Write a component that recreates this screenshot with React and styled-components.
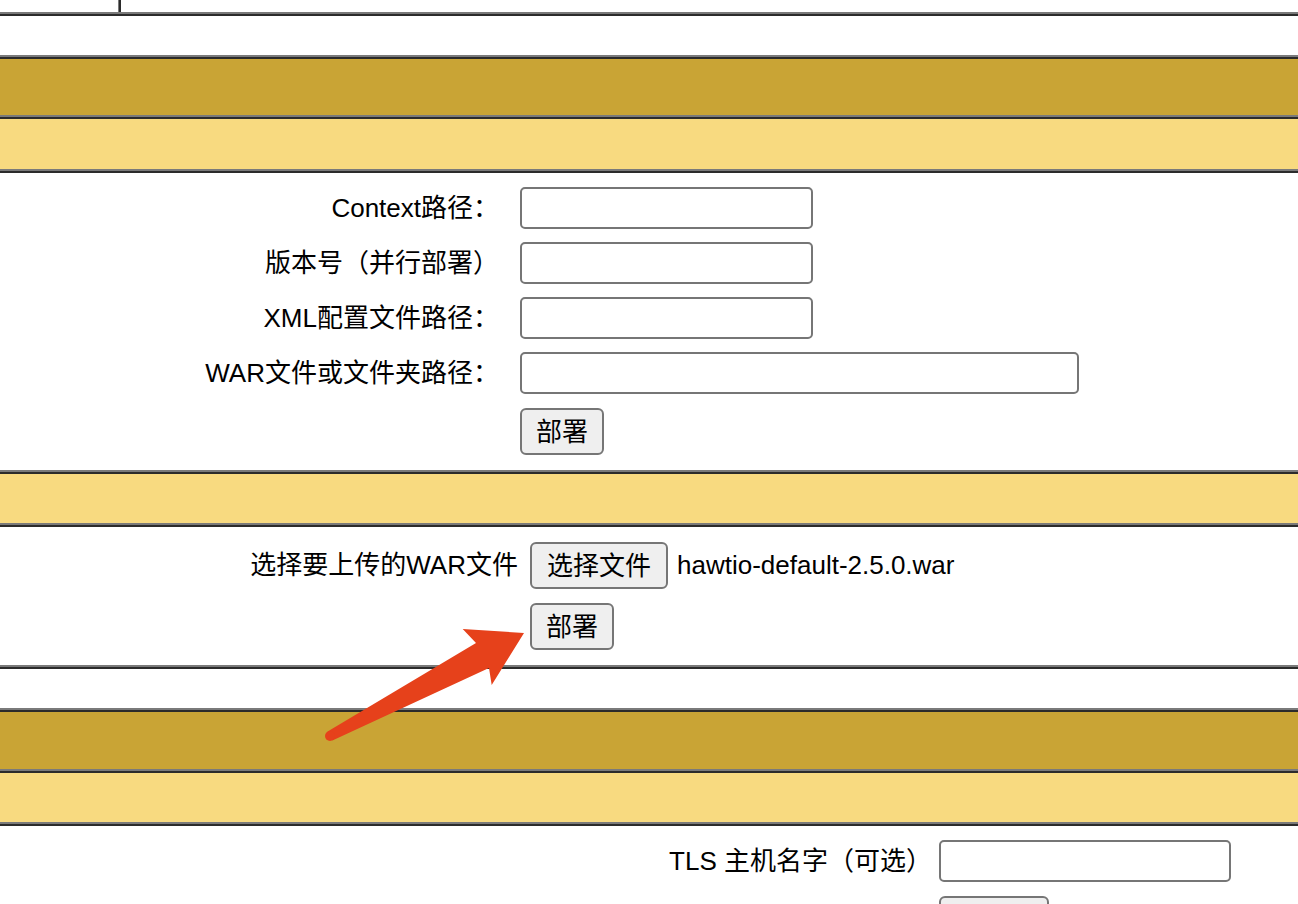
import React from "react";
import styled, { createGlobalStyle, css } from "styled-components";

const GlobalStyle = createGlobalStyle`
  html, body {
    margin: 0;
    padding: 0;
    background: #ffffff;
  }
  body {
    font-family: "Liberation Sans", "Noto Sans CJK SC", sans-serif;
    font-size: 26px;
    color: #000;
  }
`;

const GRAY = "#7a7a7a";
const DARK = "#2b2b2b";

const ruleTop = css`
  border-style: solid;
  border-width: 4px 0 0 0;
  border-image: linear-gradient(to bottom, ${GRAY} 0 2px, ${DARK} 2px 4px, transparent 4px) 4 0 0 0;
`;

const ruleBottom = css`
  border-style: solid;
  border-width: 0 0 4px 0;
  border-image: linear-gradient(to top, ${DARK} 0 2px, ${GRAY} 2px 4px, transparent 4px) 0 0 4 0;
`;

const Page = styled.div`
  position: relative;
  width: 100%;
  height: 904px;
  overflow: hidden;
  display: flex;
  flex-direction: column;
`;

const TopTable = styled.div`
  display: grid;
  grid-template-columns: 119px 1fr;
  height: 12px;
  ${ruleBottom};
  flex: none;
`;

const TopCell = styled.div`
  border-right: ${(p) => (p.$first ? `1px solid ${GRAY}` : "none")};
  border-left: ${(p) => (p.$first ? "none" : `2px solid ${DARK}`)};
`;

const Section = styled.section`
  display: flex;
  flex-direction: column;
  margin-top: 39px;
  flex: none;
  ${(p) => p.$closed && ruleBottom};
`;

const Band = styled.div`
  ${ruleTop};
  height: ${(p) => p.$h}px;
  background: ${(p) => (p.$tone === "dark" ? "#c9a435" : p.$tone === "light" ? "#f8da80" : "#ffffff")};
`;

const FormGrid = styled.div`
  display: grid;
  grid-template-columns: ${(p) => p.$label}px max-content;
  column-gap: ${(p) => p.$gap}px;
  row-gap: ${(p) => p.$rowGap || 13}px;
  align-items: center;
  align-content: start;
  padding-top: ${(p) => p.$pad}px;
`;

const Label = styled.label`
  justify-self: end;
  white-space: nowrap;
  line-height: 1.2;
  padding-top: 1px;
`;

const TextInput = styled.input`
  box-sizing: border-box;
  width: ${(p) => p.$w}px;
  height: 42px;
  border: 2px solid #767676;
  border-radius: 5px;
  background: #fff;
  padding: 0 6px;
  font: inherit;
  margin: 0;
  outline: none;
`;

const Button = styled.button`
  box-sizing: border-box;
  height: 47px;
  ${(p) => p.$w && `width: ${p.$w}px;`}
  padding: 0 14px;
  margin: ${(p) => p.$mt || 0}px 0 0;
  border: 2px solid #767676;
  border-radius: 6px;
  background: #efefef;
  font-family: "Liberation Sans", "Noto Sans CJK SC", sans-serif;
  font-size: 26px;
  color: #000;
  line-height: 1;
  white-space: nowrap;
  justify-self: start;
`;

const FileField = styled.div`
  display: flex;
  align-items: center;
  gap: 9px;
`;

const FileName = styled.span`
  white-space: nowrap;
  line-height: 1.2;
  padding-top: 1px;
`;

const Empty = styled.div``;

const ArrowLayer = styled.svg`
  position: absolute;
  left: 0;
  top: 0;
  width: 1298px;
  height: 904px;
  pointer-events: none;
`;

export default function App() {
  return (
    <>
      <GlobalStyle />
      <Page>
        <TopTable>
          <TopCell $first />
          <TopCell />
        </TopTable>

        <Section $closed>
          <Band $tone="dark" $h={56} />
          <Band $tone="light" $h={50} />
          <Band $h={297}>
            <FormGrid $label={499} $gap={21} $pad={14}>
              <Label>Context路径：</Label>
              <TextInput $w={293} />
              <Label>版本号（并行部署）</Label>
              <TextInput $w={293} />
              <Label>XML配置文件路径：</Label>
              <TextInput $w={293} />
              <Label>WAR文件或文件夹路径：</Label>
              <TextInput $w={559} />
              <Empty />
              <Button $mt={1}>部署</Button>
            </FormGrid>
          </Band>
          <Band $tone="light" $h={49} />
          <Band $h={138}>
            <FormGrid $label={518} $gap={12} $pad={15} $rowGap={14}>
              <Label>选择要上传的WAR文件</Label>
              <FileField>
                <Button $w={138}>选择文件</Button>
                <FileName>hawtio-default-2.5.0.war</FileName>
              </FileField>
              <Empty />
              <Button>部署</Button>
            </FormGrid>
          </Band>
        </Section>

        <Section>
          <Band $tone="dark" $h={57} />
          <Band $tone="light" $h={49} />
          <Band $h={200}>
            <FormGrid $label={932} $gap={7} $pad={14} $rowGap={14}>
              <Label>TLS 主机名字（可选）</Label>
              <TextInput $w={292} />
              <Empty />
              <Button $w={110} aria-label="重新读取" />
            </FormGrid>
          </Band>
        </Section>

        <ArrowLayer viewBox="0 0 1298 904">
          <polygon
            points="327.6,731.6 476,643 462.7,629 524,633 491.7,685 489,668 332.4,740.4"
            fill="#e6411b"
          />
          <circle cx="330" cy="736" r="5" fill="#e6411b" />
        </ArrowLayer>
      </Page>
    </>
  );
}
